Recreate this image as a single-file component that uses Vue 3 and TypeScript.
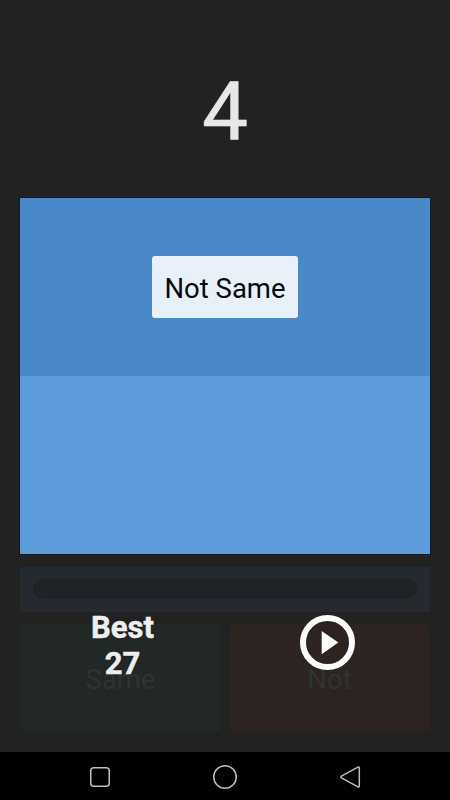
<script setup lang="ts">
const score = 4
const best = 27
</script>

<template>
  <div class="screen">
    <main class="game">
      <div class="score">{{ score }}</div>
      <section class="board">
        <div class="half top"><div class="prompt">Not Same</div></div>
        <div class="half bottom"></div>
      </section>
      <div class="progress"><div class="track"></div></div>
      <div class="controls">
        <div class="answers">
          <div class="answer same">Same</div>
          <div class="answer not">Not</div>
        </div>
        <div class="overlay">
          <div class="best">Best<br />{{ best }}</div>
          <div class="play">
            <svg width="57" height="57" viewBox="0 0 57 57">
              <circle cx="28.5" cy="28.5" r="24.5" fill="none" stroke="#fff" stroke-width="6" />
              <path d="M22.7 17 L39.3 28.6 L22.7 40.3 Z" fill="#fff" />
            </svg>
          </div>
        </div>
      </div>
    </main>
    <nav class="navbar">
      <svg width="24" height="24" viewBox="0 0 24 24">
        <rect x="2.75" y="2.75" width="18.5" height="18.5" rx="3" fill="none" stroke="#bdbdbd" stroke-width="1.5" />
      </svg>
      <svg width="24" height="24" viewBox="0 0 24 24">
        <circle cx="12" cy="12" r="11.25" fill="none" stroke="#bdbdbd" stroke-width="1.5" />
      </svg>
      <svg width="24" height="24" viewBox="0 0 24 24">
        <path d="M20 2.2 C20.9 1.7 21.3 2.2 21.3 3.2 V20.8 C21.3 21.8 20.9 22.3 20 21.8 L3.4 12.9 C2.6 12.4 2.6 11.6 3.4 11.1 Z" fill="none" stroke="#bdbdbd" stroke-width="1.5" />
      </svg>
    </nav>
  </div>
</template>

<style scoped>
.screen {
  width: 450px;
  height: 800px;
  display: flex;
  flex-direction: column;
  background: #222222;
  font-family: Roboto, "Liberation Sans", sans-serif;
  overflow: hidden;
}
.game {
  height: 752px;
  display: flex;
  flex-direction: column;
  padding: 0 20px;
  box-sizing: border-box;
}
.score {
  height: 197px;
  padding-top: 71px;
  box-sizing: border-box;
  text-align: center;
  font-size: 82px;
  line-height: 82px;
  color: #e8e8e8;
  -webkit-text-stroke: 0.5px #e8e8e8;
}
.board {
  height: 358px;
  box-sizing: border-box;
  margin: 0 -1px;
  border: 1px solid #14181c;
  display: flex;
  flex-direction: column;
}
.half {
  flex: 1 1 0;
  min-height: 0;
  display: flex;
  justify-content: center;
}
.top { background: #4a89c8; }
.bottom { background: #5d9cdb; }
.prompt {
  width: 146px;
  height: 62px;
  margin-top: 58px;
  border-radius: 3px;
  background: #e8f0fa;
  color: #0a0a0a;
  font-size: 27.5px;
  line-height: 66px;
  text-align: center;
}
.progress {
  margin-top: 12px;
  height: 45px;
  padding: 12px 13px 13px;
  box-sizing: border-box;
  background: #252a30;
}
.track {
  height: 20px;
  border-radius: 10px;
  background: #1f2326;
}
.controls {
  position: relative;
  margin-top: 12px;
}
.answers {
  display: grid;
  grid-template-columns: 1fr 1fr;
  column-gap: 8px;
}
.answer {
  height: 108px;
  border-radius: 6px;
  font-size: 27.5px;
  line-height: 112px;
  text-align: center;
  color: #2f3332;
}
.same { background: #222825; }
.not { background: #2d2321; }
.overlay {
  position: absolute;
  inset: -14px 0 auto 0;
  display: grid;
  grid-template-columns: 1fr 1fr;
  column-gap: 8px;
}
.best {
  padding-left: 4px;
  text-align: center;
  font-size: 31px;
  font-weight: 700;
  line-height: 36px;
  color: #eeeeee;
  -webkit-text-stroke: 0.5px #eeeeee;
  text-shadow: 0 0 2px #000;
}
.play {
  display: flex;
  justify-content: center;
  padding-right: 4px;
  height: 57px;
  margin-top: 4px;
}
.navbar {
  height: 48px;
  background: #000;
  padding-top: 2px;
  box-sizing: border-box;
  display: flex;
  justify-content: center;
  align-items: center;
  gap: 101px;
}
</style>
